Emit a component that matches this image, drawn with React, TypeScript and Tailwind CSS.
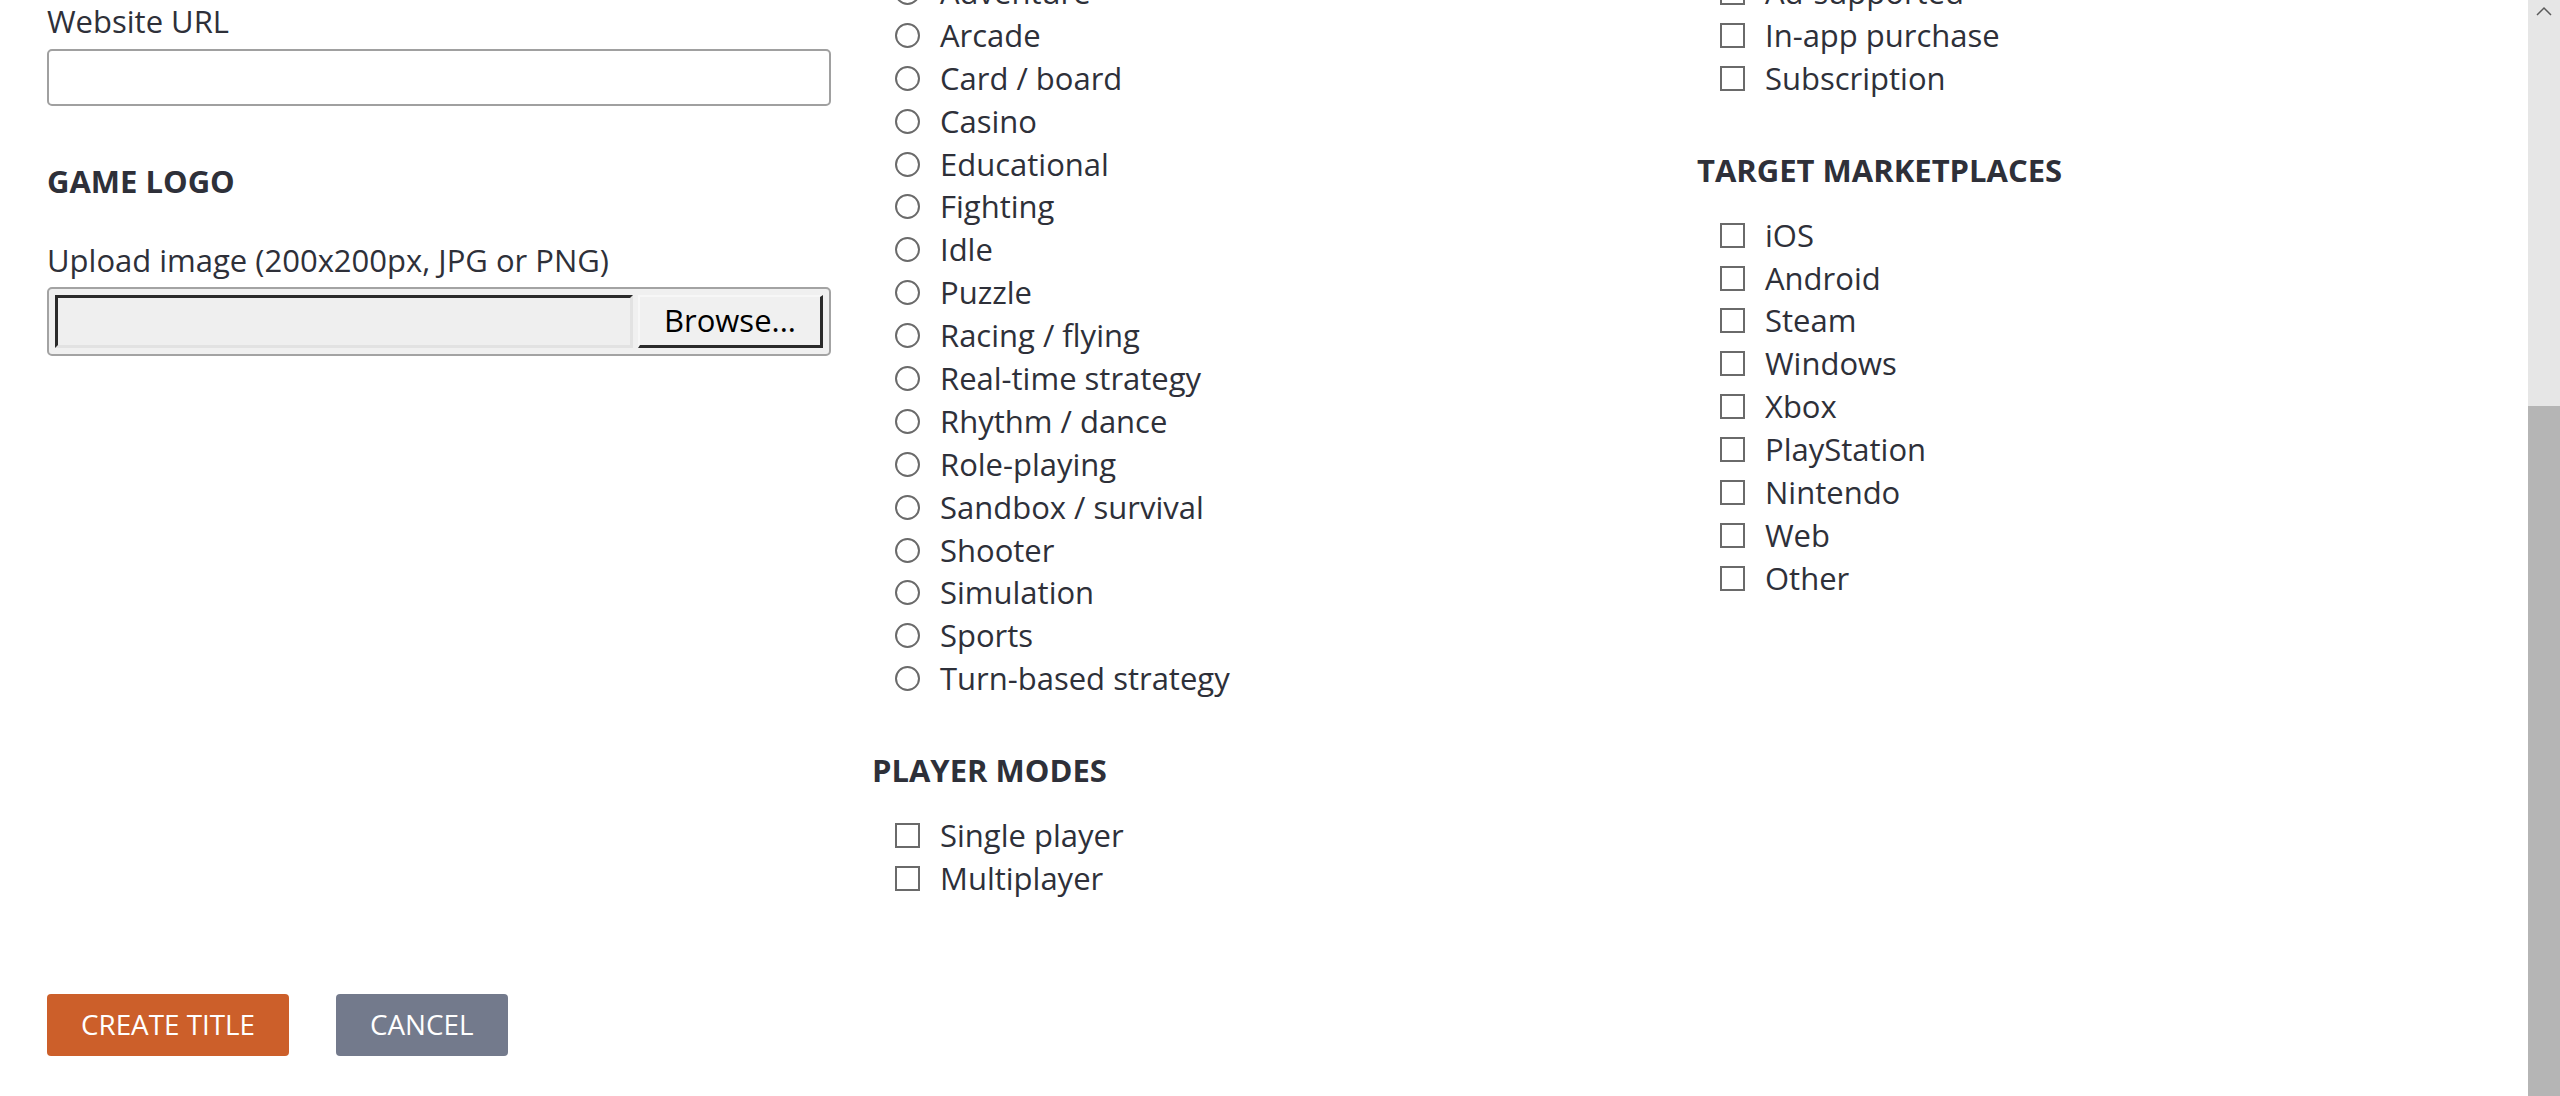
import React from "react";

const genres = [
  "Adventure",
  "Arcade",
  "Card / board",
  "Casino",
  "Educational",
  "Fighting",
  "Idle",
  "Puzzle",
  "Racing / flying",
  "Real-time strategy",
  "Rhythm / dance",
  "Role-playing",
  "Sandbox / survival",
  "Shooter",
  "Simulation",
  "Sports",
  "Turn-based strategy",
];

const playerModes = ["Single player", "Multiplayer"];
const businessModels = ["Ad-supported", "In-app purchase", "Subscription"];
const marketplaces = ["iOS", "Android", "Steam", "Windows", "Xbox", "PlayStation", "Nintendo", "Web", "Other"];

// Single option row (radio or checkbox)
function Option({ label, kind }: { label: string; kind: "radio" | "check" }) {
  return (
    <label className="flex items-center h-[42.9px] pl-[23px]">
      <span
        className={
          kind === "radio"
            ? "w-[25px] h-[25px] rounded-full border-2 border-[#6a6a6a] bg-white shrink-0"
            : "w-[25px] h-[25px] border-2 border-[#6a6a6a] bg-white shrink-0"
        }
      />
      <span className="ml-[20px] whitespace-nowrap">{label}</span>
    </label>
  );
}

function Heading({ children }: { children: React.ReactNode }) {
  return (
    <h3 className="text-[31px] leading-[48px] font-bold uppercase text-[#2e3039] mt-[46px] mb-[20px]">
      {children}
    </h3>
  );
}

export default function App() {
  return (
    <div
      className="flex w-full h-[1096px] overflow-hidden bg-white text-[#2e3039] text-[31px] leading-[42.9px]"
      style={{ fontFamily: '"Open Sans", "Noto Sans", sans-serif' }}
    >
      {/* Page content (scrolled) */}
      <div className="flex-1 px-[47px]">
        <div className="-mt-[29px]">
          <div className="grid grid-cols-3 gap-x-[41px] items-start">
            {/* Left column */}
            <div className="pt-[29px]">
              <div>Website URL</div>
              <div className="mt-[6px] h-[57px] w-full rounded-[5px] border-2 border-[#a0a0a0] bg-white" />

              <h3 className="text-[31px] leading-[48px] font-bold uppercase mt-[51px]">Game logo</h3>

              <div className="mt-[34px]">Upload image (200x200px, JPG or PNG)</div>
              <div className="mt-[5px] flex gap-[5px] rounded-[5px] border-2 border-[#a3a3a3] bg-[#f0f0f0] p-[6px]">
                <div className="flex-1 h-[53px] border-t-[3px] border-l-[3px] border-b-[3px] border-r-[3px] border-t-[#2a2a2a] border-l-[#2a2a2a] border-b-[#e2e2e2] border-r-[#e2e2e2] bg-[#efefef]" />
                <div className="w-[185px] h-[53px] flex items-center justify-center border-t-2 border-l-2 border-b-[3px] border-r-[3px] border-t-[#f7f7f7] border-l-[#f7f7f7] border-b-[#2a2a2a] border-r-[#2a2a2a] bg-[#f0f0f0] text-black">
                  Browse...
                </div>
              </div>
            </div>

            {/* Middle column */}
            <div>
              {genres.map((g) => (
                <Option key={g} label={g} kind="radio" />
              ))}
              <Heading>Player modes</Heading>
              {playerModes.map((m) => (
                <Option key={m} label={m} kind="check" />
              ))}
            </div>

            {/* Right column */}
            <div>
              {businessModels.map((b) => (
                <Option key={b} label={b} kind="check" />
              ))}
              <Heading>Target marketplaces</Heading>
              {marketplaces.map((m) => (
                <Option key={m} label={m} kind="check" />
              ))}
            </div>
          </div>

          {/* Actions */}
          <div className="flex gap-[47px] mt-[94px]">
            <button className="h-[62px] px-[34px] rounded-[4px] bg-[#cc5f2a] text-white uppercase text-[27.8px]">
              Create title
            </button>
            <button className="h-[62px] px-[34px] rounded-[4px] bg-[#737a8c] text-white uppercase text-[27.8px]">
              Cancel
            </button>
          </div>
        </div>
      </div>

      {/* Scrollbar */}
      <div className="w-[32px] h-[1096px] flex flex-col bg-[#e6e6e6] shrink-0">
        <div className="h-[406px] flex justify-center pt-[5px]">
          <svg width="18" height="12" viewBox="0 0 18 12">
            <path d="M2 10 L9 3 L16 10" fill="none" stroke="#5a5a5a" strokeWidth="1.5" />
          </svg>
        </div>
        <div className="flex-1 bg-[#b5b5b5]" />
      </div>
    </div>
  );
}
